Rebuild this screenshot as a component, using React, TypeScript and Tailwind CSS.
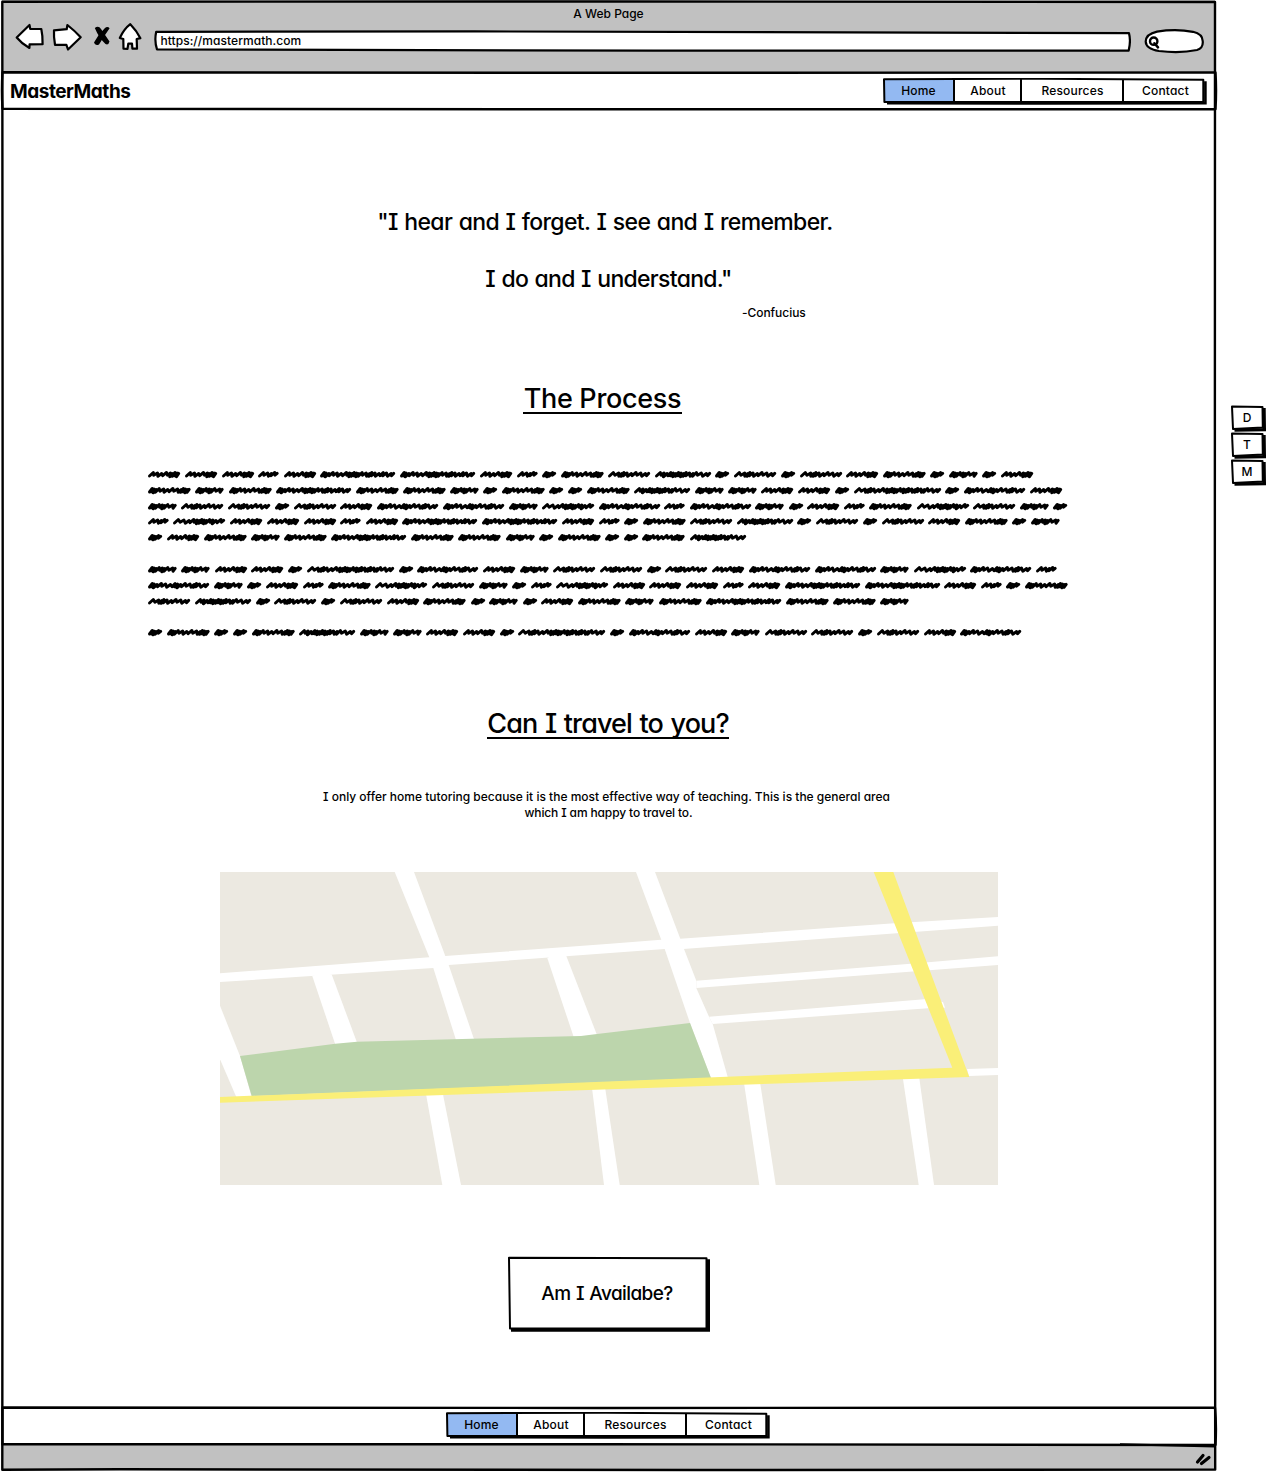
import type { ReactNode } from "react";

/* Pen strokes that make up each scribbled word: total width and the spacing of its zigzags. */
const WORDS: Record<string, { w: number; steps: number[] }> = {
  A: { w: 32, steps: [4, 4, 4.6, 4.6, 2.2, 2.2, 2, 2.2] },
  B: { w: 20.5, steps: [5, 5, 3, 4.5] },
  C: { w: 75, steps: [1.8, 1.8, 4, 4, 4, 5, 4, 2.2, 2.2, 2.4, 2.2, 2.4, 4, 4, 2.2, 2.4, 4, 4.6, 2.6, 4.6, 4] },
  D: { w: 42.5, steps: [1.8, 1.8, 2.2, 4.4, 4, 5, 4.6, 4.4, 2.2, 2.2, 2, 2.2] },
  E: { w: 28.5, steps: [1.8, 1.8, 2.2, 4, 2.2, 2.2, 4.8, 4] },
  F: { w: 14, steps: [1.8, 1.8, 2.2, 3.6] },
  G: { w: 42, steps: [5.4, 4, 2.2, 2.2, 4.4, 4.6, 4.8, 4.8, 4.8] },
  H: { w: 56, steps: [4, 2.2, 4, 2.2, 2.2, 2.4, 2.2, 2.4, 2.2, 2.4, 4, 2.2, 4.4, 4.6, 4.4] },
  I: { w: 61, steps: [1.8, 1.8, 4, 4, 4.6, 5, 2.4, 2.2, 4.4, 4.4, 4.6, 2.2, 2.2, 4.8, 4.4] },
  J: { w: 52, steps: [5.4, 5, 4.6, 4, 2.2, 2.2, 2.4, 2.2, 2.2, 4, 2.2, 4.8, 4.2] },
  K: { w: 87, steps: [5.4, 4, 2.2, 2.2, 4.4, 4.4, 4.4, 2.4, 2.2, 2.4, 2.2, 2.4, 4, 2.2, 2.4, 2.2, 4, 2.2, 2.4, 4, 2.2, 4.4, 4.4, 4.2] },
};

const PARAGRAPHS = [
  [
    "AAABACCABFDGHFGFGADFEFA",
    "DEDCDDEFDFFDHEEAAFKFIA",
    "EGGFGAIIEJIBIEFABDJGEF",
    "BJAAABACCABFDGHFGFGADFE",
    "FADEDCDDEFDFFDH",
  ],
  ["EEAAFKFIAEGGFGAIIEJIB", "IEFABDJGEFBJAAABACCABFD", "GHFGFGADFEFADEDCDDE"],
  ["FDFFDHEEAAFKFIAEGGFGAI"],
];

function scribble(kind: string) {
  const { w, steps } = WORDS[kind];
  const total = steps.reduce((a, b) => a + b, 0);
  const k = (w - 5) / total;
  let x = 1.5;
  let d = `M${x} 6`;
  steps.forEach((s, i) => {
    const step = s * k;
    const dense = s < 3 ? 0.6 : 0;
    const top = 2.5 + ((i * 7) % 3) * 0.5;
    const low = 5.2 + dense + ((i * 5) % 3) * 0.5;
    const up = x + Math.min(step, 4) * 0.5 + 1.8;
    x += step;
    d += ` L${up.toFixed(1)} ${top.toFixed(1)} L${x.toFixed(1)} ${low.toFixed(1)}`;
  });
  return `${d} L${(w - 1.3).toFixed(1)} 3.4`;
}

function ScribbleLine({ words }: { words: string }) {
  return (
    <div className="flex h-[15.84px] items-center gap-[4.76px]">
      {words.split("").map((kind, i) => (
        <svg key={i} width={WORDS[kind].w} height="10" className="shrink-0 overflow-visible">
          <path d={scribble(kind)} fill="none" stroke="black" strokeWidth="3" strokeLinejoin="round" strokeLinecap="round" />
        </svg>
      ))}
    </div>
  );
}

const NAV = [
  { label: "Home", cell: "w-[69px] bg-[#93b9f2]" },
  { label: "About", cell: "w-[67px] border-l-2 border-black pl-[1px]" },
  { label: "Resources", cell: "w-[102px] border-l-2 border-black pl-[1px]" },
  { label: "Contact", cell: "w-[81px] border-l-2 border-black pl-1" },
];

function NavBar() {
  return (
    <nav className="relative flex h-[26px] w-[323px] pt-[1px] pl-[1px] text-[12px] font-medium tracking-[0.2px]">
      {NAV.map((item) => (
        <a key={item.label} className={`flex h-[23px] items-center justify-center ${item.cell}`}>
          {item.label}
        </a>
      ))}
      <svg className="absolute inset-0" width="324" height="27" fill="none" stroke="black">
        <path d="M1 1.2 L160 .8 L320.3 1.8 V24 H1.4 Z" strokeWidth="2" strokeLinejoin="round" />
        <path d="M4 25.2 L160 25.4 L322.4 25.2 V3.2" strokeWidth="2.6" />
      </svg>
    </nav>
  );
}

function KeyButton({ children }: { children: ReactNode }) {
  return (
    <button className="relative flex h-[27px] w-[36px] items-start justify-center pt-[5px] pr-[4px] text-[12px] leading-[15px] font-medium">
      {children}
      <svg className="absolute inset-0" width="36" height="27" fill="none" stroke="black">
        <path d="M1 1.6 L31.5 2 L31.8 22.5 L2 24 Z" strokeWidth="2" strokeLinejoin="round" />
        <path d="M3.5 25 L33.3 24.6 L33 3" strokeWidth="3.4" />
      </svg>
    </button>
  );
}

function Toolbar() {
  return (
    <header className="h-[72px] bg-[#c1c1c1]">
      <div className="flex h-[27px] items-center justify-center text-[12px] font-medium">
        <span>A Web Page</span>
      </div>
      <div className="-mt-[5px] flex items-start pl-[13px]">
        <svg width="128" height="32" fill="white" stroke="black" strokeWidth="2.2" strokeLinejoin="round" strokeLinecap="round">
          <path d="M1.7 15.5 L14.5 3 L15.2 6.8 L26.3 7 Q27.8 14 27.6 22.2 L14.6 22.4 L14.4 26 Q7 22 1.7 15.5Z" />
          <path d="M39 8.3 L51.7 7.2 L52.4 3 Q60 9 65.7 15.3 L53 27.5 L51.4 22.8 L40 22.8 Q38.6 15 39 8.3Z" />
          <g fill="black" stroke="none">
            <path d="M79.8 6 Q83.5 3 86 7 L94.5 19.5 Q93.5 23.5 90.5 22 Q84 16 79.8 6Z" />
            <path d="M94.6 6.2 Q92.5 3.6 89.5 6.4 Q83 12.5 79 20.5 Q80 24 84 22.4 Q89.5 13.5 94.6 6.2Z" />
          </g>
          <path d="M115.3 2.2 Q121.5 8.5 125.4 16.2 L121.7 17 L122 26.7 L117.4 26.7 L117 21.7 L113.3 21.7 L112.5 26.9 L108.5 26.7 L108.3 17 L104.8 16 Q109 7 115.3 2.2Z" />
        </svg>
        <div className="relative mt-[8px] ml-[10.5px] flex h-[22px] w-[976.5px] items-center pl-[7px]">
          <svg className="absolute inset-0" width="977" height="22" fill="white" stroke="black" strokeWidth="2.2">
            <path d="M2.2 1.8 L320 1.4 L975 3.2 Q977 11 974.7 20.6 L500 20.7 L3 19.4 Q.2 11 2.2 1.8Z" strokeLinejoin="round" />
          </svg>
          <span className="relative text-[12px] leading-none font-medium tracking-[0.05px]">https://mastermath.com</span>
        </div>
        <svg className="mt-[6px] ml-[14px]" width="62" height="26" fill="white" stroke="black" strokeWidth="2.2">
          <path d="M13 3.6 Q32 .6 49 3.8 Q58.5 6 58.7 13 Q59.5 20 53 22 Q36 25.5 15 23 Q2 21 1.7 13.5 Q2 6 13 3.6Z" />
          <circle cx="9.7" cy="13.2" r="3.7" fill="none" strokeWidth="2.4" />
          <path d="M10.4 15.2 L14 19.4" strokeLinecap="round" strokeWidth="2.5" />
        </svg>
      </div>
    </header>
  );
}

function StreetMap() {
  return (
    <svg width="778" height="313" viewBox="0 0 778 313" className="mt-[51px] ml-[220px] block">
      <rect width="778" height="313" fill="#ece9e1" />
      <g fill="white">
        <path d="M174.7 0H194L225.3 84L228.7 93L254.3 168L236 168L213.3 96L209.3 85.3Z" />
        <path d="M0 101.3L209.3 85.3L225.3 84L390 71.7L441 67.7L460.3 66.7L674.3 51.3L778 45V53.7L463.3 77L444.7 77L228.7 93L213.3 96L0 110Z" />
        <path d="M416 0H435L460.3 66.7L464 77L476.3 108.7V116L489 144.7L492.7 152L508 206H491L470 151L444.7 77Z" />
        <path d="M476.3 108.7L690.7 91.7L778 84.3V93L476.3 116Z" />
        <path d="M489 144.7L704.3 127.3L723 130L725 135.7L708 136.3L492.7 152Z" />
        <path d="M92.3 104L101 101L111.7 102.6L137 170.5L115.3 172.5Z" />
        <path d="M327.3 86L336 82L346.3 84L377 163L353.7 165Z" />
        <path d="M0 133.7L20 184L31.7 225H16.3L0 187.3Z" />
        <path d="M747 197L778 196V203L749 204Z" />
        <path d="M206 222L222.7 221L241 313H222.3Z" />
        <path d="M372 216L385 215L399.7 313H384Z" />
        <path d="M524 211L540 210L555.7 313H539.3Z" />
        <path d="M682.7 205L699 204L714 313H698.7Z" />
      </g>
      <path fill="#bcd5ac" d="M20 184L115.3 171.7L137 169.7L361 164L377 162L470 151L491 206L31.7 224Z" />
      <path fill="#faef78" d="M0 225L732.3 195.7L653.7 0H673.3L749.3 205L0 230.7Z" />
    </svg>
  );
}

function WindowOutline() {
  return (
    <svg className="pointer-events-none absolute inset-0" width="1218" height="1472" fill="none" stroke="black" strokeWidth="2.4" strokeLinejoin="round">
      <path d="M2.3 1.8 L600 1.5 L1215 2 L1214.8 700 L1215.2 1469.5 L700 1470 L120 1469.3 L2.3 1469.8 L2.8 700 Z" />
      <path d="M2.5 72.3 L600 72.8 L1215.5 72.5 Q1216.6 90 1215.5 109.3 L600 109.3 L2.5 108.8 Q1.4 90 2.5 72.3Z" />
      <path d="M2.5 1407.5 L600 1408 L1215 1407.7 Q1216.6 1425 1215.5 1445 L600 1444.2 L2.5 1444.3 Z" />
      <path d="M1120 1444.3 L1215 1446.5" strokeWidth="2" />
      <path d="M1197.5 1462 L1203 1455.5 M1201.5 1463.5 L1209 1457.5" strokeWidth="3.2" strokeLinecap="round" />
    </svg>
  );
}

export default function App() {
  return (
    <div className="flex h-[1472px] w-[1267px] overflow-hidden bg-white font-['Inter',sans-serif] text-black [font-feature-settings:'cv08','cv11']">
      <div className="relative flex w-[1217px] shrink-0 flex-col">
        <div className="mx-[2px] flex h-[110px] flex-col">
          <Toolbar />
          <div className="flex h-[38px] items-center justify-between pr-[9px] pl-[8px]">
            <h1 className="pt-[2px] text-[19px] font-bold tracking-[-0.47px]">MasterMaths</h1>
            <NavBar />
          </div>
        </div>
        <main className="flex h-[1297px] w-[1217px] flex-col">
          <blockquote className="mt-[84px] font-medium">
            <p className="pr-[7px] text-center text-[23px] leading-[57px] tracking-[-0.64px] [word-spacing:1px]">"I hear and I forget. I see and I remember.</p>
            <p className="text-center text-[23px] leading-[57px] tracking-[-0.7px] [word-spacing:1px]">I do and I understand."</p>
            <p className="-mt-[4px] ml-[742px] text-[12px] leading-[18px] tracking-[-0.05px]">-Confucius</p>
          </blockquote>
          <h2 className="mt-[61px] ml-[523px] h-[30.5px] w-[159px] border-b-2 border-black text-center text-[27px] leading-[31px] font-medium tracking-[-0.3px] whitespace-nowrap">
            The Process
          </h2>
          <section className="mt-[53.5px] ml-[148px] flex flex-col gap-[15.84px]">
            {PARAGRAPHS.map((lines, i) => (
              <div key={i}>
                {lines.map((words) => (
                  <ScribbleLine key={words} words={words} />
                ))}
              </div>
            ))}
          </section>
          <h2 className="mt-[67px] ml-[487px] h-[30.5px] w-[242px] border-b-2 border-black text-center text-[27px] leading-[31px] font-medium tracking-[-0.9px] whitespace-nowrap [word-spacing:1.3px]">
            Can I travel to you?
          </h2>
          <div className="mt-[50.5px] text-center text-[12px] leading-[16px] font-medium">
            <p className="pr-[4px]">I only offer home tutoring because it is the most effective way of teaching. This is the general area</p>
            <p className="tracking-[-0.13px]">which I am happy to travel to.</p>
          </div>
          <StreetMap />
          <button className="relative mt-[71px] ml-[507px] flex h-[76px] w-[203px] items-center justify-center pr-[3px] text-[19px] font-medium tracking-[-0.6px] [word-spacing:1px]">
            Am I Availabe?
            <svg className="absolute inset-0" width="203" height="76" fill="none" stroke="black">
              <path d="M2 1.8 L100 2 L199.5 2.2 V72.6 H3 Z" strokeWidth="2" strokeLinejoin="round" />
              <path d="M4 74.2 L201.5 74.2 V3.2" strokeWidth="3" />
            </svg>
          </button>
        </main>
        <footer className="mx-[2px]">
          <div className="flex h-[37px] items-start pt-[5px] pl-[444px]">
            <NavBar />
          </div>
          <div className="h-[26px] bg-[#c1c1c1]" />
        </footer>
        <WindowOutline />
      </div>
      <aside className="mt-[405px] ml-[14px] flex flex-col">
        <KeyButton>D</KeyButton>
        <KeyButton>T</KeyButton>
        <KeyButton>M</KeyButton>
      </aside>
    </div>
  );
}
